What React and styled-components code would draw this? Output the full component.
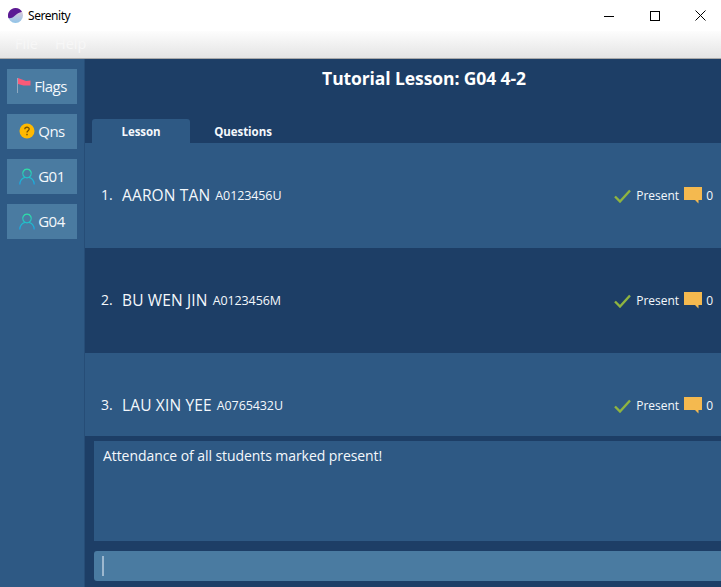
import React from 'react';
import styled, { createGlobalStyle } from 'styled-components';

const Dark = '#1d3e66';
const Mid = '#2e5984';
const Light = '#4a7ba1';
const Text = '#f4f8fc';
const FontStack = '"Open Sans", "Noto Sans", sans-serif';

const GlobalStyle = createGlobalStyle`
  html, body {
    margin: 0;
    padding: 0;
    background: ${Dark};
    overflow: hidden;
  }
  * { box-sizing: border-box; }
`;

const Window = styled.div`
  width: 721px;
  height: 587px;
  display: flex;
  flex-direction: column;
  overflow: hidden;
  font-family: ${FontStack};
  color: ${Text};
`;

const TitleBar = styled.div`
  height: 31px;
  flex: none;
  display: flex;
  align-items: center;
  margin-right: -2px;
  padding-left: 8px;
  background: #fff;
  color: #000;
  font-size: 12px;
`;

const AppName = styled.span`
  margin-left: 5px;
  flex: 1;
  font-family: "Noto Sans", sans-serif;
  letter-spacing: -0.45px;
`;

const WinButton = styled.div`
  width: 45.5px;
  height: 31px;
  display: flex;
  align-items: center;
  justify-content: center;
`;

const MenuBar = styled.div`
  height: 28px;
  flex: none;
  display: flex;
  gap: 17px;
  align-items: center;
  padding: 0 0 2px 15px;
  background: linear-gradient(#fdfdfd, #e4e4e4);
  border-bottom: 1px solid #a9a9a9;
  font-size: 14.5px;
  color: #f7f7f7;
`;

const Body = styled.div`
  flex: 1;
  min-height: 0;
  display: flex;
`;

const Sidebar = styled.nav`
  width: 85px;
  flex: none;
  display: flex;
  flex-direction: column;
  gap: 10px;
  padding: 10px 7px;
  background: ${Mid};
  border-right: 1px solid #264d77;
`;

const SideButton = styled.div`
  width: 70px;
  height: 35px;
  padding-bottom: 1px;
  display: flex;
  align-items: center;
  justify-content: center;
  gap: 3px;
  background: ${Light};
  font-size: 15px;
  letter-spacing: -0.5px;
`;

const Main = styled.main`
  flex: 1;
  min-width: 0;
  display: flex;
  flex-direction: column;
  background: ${Dark};
`;

const Heading = styled.h1`
  height: 60px;
  flex: none;
  margin: 0;
  padding: 6px 0 0 42px;
  text-align: center;
  font-size: 17.5px;
  line-height: 26px;
  font-weight: 700;
  color: #fff;
  letter-spacing: -0.1px;
`;

const Tabs = styled.div`
  height: 24px;
  flex: none;
  display: flex;
  padding-left: 7px;
`;

const Tab = styled.div`
  width: ${(p) => p.$width}px;
  display: flex;
  align-items: center;
  justify-content: center;
  padding-top: 1px;
  border-radius: 3px 3px 0 0;
  background: ${(p) => (p.$active ? Mid : 'transparent')};
  font-size: 11.5px;
  font-weight: 700;
  letter-spacing: -0.05px;
`;

const List = styled.div`
  height: 293px;
  flex: none;
  overflow: hidden;
`;

const Row = styled.div`
  height: 105px;
  display: flex;
  align-items: center;
  padding: 0 8px 2px 16px;
  background: ${(p) => (p.$alt ? Dark : Mid)};
`;

const Index = styled.span`
  width: 21px;
  font-size: 14px;
`;

const Name = styled.span`
  font-size: 15.5px;
  letter-spacing: 0.15px;
  font-weight: 400;
`;

const Matric = styled.span`
  margin-left: 5px;
  padding-top: 1px;
  font-size: 12.5px;
  letter-spacing: -0.1px;
`;

const Status = styled.div`
  margin-left: auto;
  padding-top: 2px;
  display: flex;
  align-items: center;
  font-size: 12px;
  letter-spacing: 0;
`;

const PresentLabel = styled.span`
  margin: 0 5px;
`;

const CountLabel = styled.span`
  margin-left: 4px;
`;

const ResultBox = styled.div`
  height: 100px;
  flex: none;
  margin: 5px 0 0 9px;
  padding: 4px 9px;
  background: ${Mid};
  font-size: 14px;
  line-height: 22px;
  letter-spacing: -0.07px;
`;

const CommandBox = styled.div`
  height: 30px;
  flex: none;
  margin: 10px 0 0 9px;
  padding: 5px 8px;
  border-radius: 3px 0 0 3px;
  background: ${Light};
`;

const Caret = styled.div`
  width: 2px;
  height: 20px;
  background: #9db8cf;
`;

const Logo = () => (
  <svg width="15" height="15" viewBox="0 0 15 15">
    <defs>
      <linearGradient id="logoBase" x1="0" y1="0" x2="0" y2="1">
        <stop offset="0" stopColor="#f3c9d6" />
        <stop offset="1" stopColor="#8fc4e8" />
      </linearGradient>
    </defs>
    <circle cx="7.5" cy="7.5" r="7.5" fill="url(#logoBase)" />
    <path d="M1.2 3.5A7.5 7.5 0 0 1 14 3.8C11 5 9 5.5 6.5 8 4.5 10 2 10.5.4 10A7.5 7.5 0 0 1 1.2 3.5Z" fill="#5b1a94" />
  </svg>
);

const FlagIcon = () => (
  <svg width="14" height="16" viewBox="0 0 14 16">
    <path d="M.5 0v15" stroke="#8fa9c0" strokeWidth="1" />
    <path d="M1 0l8 3 4.5-.5v5H6.5L1 6Z" fill="#fb5a78" />
  </svg>
);

const QuestionIcon = () => (
  <svg width="16" height="16" viewBox="0 0 16 16">
    <circle cx="8" cy="8" r="7.5" fill="#ffb900" />
    <path d="M5.8 6.2C5.8 3.6 10.2 3.6 10.2 6.1C10.2 7.8 8 7.7 8 9.5" fill="none" stroke="#7a5200" strokeWidth="1.3" />
    <rect x="7.3" y="10.8" width="1.4" height="1.5" fill="#7a5200" />
  </svg>
);

const PersonIcon = () => (
  <svg width="16" height="17" viewBox="0 0 16 17" fill="none">
    <defs>
      <linearGradient id="personStroke" x1="0" y1="0" x2="0" y2="1">
        <stop offset="0" stopColor="#2ee0a6" />
        <stop offset="1" stopColor="#17a5e8" />
      </linearGradient>
    </defs>
    <path d="M.8 16.5C.8 12.5 3.5 10 5.6 9.7M15.2 16.5C15.2 12.5 12.5 10 10.4 9.7M8 1.2a4.3 4.3 0 1 0 .01 0Z" stroke="url(#personStroke)" strokeWidth="1.2" />
  </svg>
);

const CheckIcon = () => (
  <svg width="17" height="14" viewBox="0 0 17 14">
    <path d="M1 7.5L6 12.5L16 1.5" fill="none" stroke="#8fb440" strokeWidth="2.4" />
  </svg>
);

const BubbleIcon = () => (
  <svg width="18" height="17" viewBox="0 0 18 17">
    <path d="M0 0h18v13h-3.5v3.5L11 13H0Z" fill="#f4b94f" />
  </svg>
);

const MinimizeIcon = () => (
  <svg width="10" height="10" viewBox="0 0 10 10">
    <path d="M0 5.5h10" stroke="#000" strokeWidth="1" />
  </svg>
);

const MaximizeIcon = () => (
  <svg width="10" height="10" viewBox="0 0 10 10">
    <rect x=".5" y=".5" width="9" height="9" fill="none" stroke="#000" strokeWidth="1" />
  </svg>
);

const CloseIcon = () => (
  <svg width="11" height="11" viewBox="0 0 11 11">
    <path d="M.5 .5l10 10M10.5 .5l-10 10" stroke="#000" strokeWidth="1" />
  </svg>
);

const sideItems = [
  { label: 'Flags', icon: <FlagIcon /> },
  { label: 'Qns', icon: <QuestionIcon /> },
  { label: 'G01', icon: <PersonIcon /> },
  { label: 'G04', icon: <PersonIcon /> },
];

const students = [
  { name: 'AARON TAN', matric: 'A0123456U' },
  { name: 'BU WEN JIN', matric: 'A0123456M' },
  { name: 'LAU XIN YEE', matric: 'A0765432U' },
];

const App = () => (
  <Window>
    <GlobalStyle />
    <TitleBar>
      <Logo />
      <AppName>Serenity</AppName>
      <WinButton><MinimizeIcon /></WinButton>
      <WinButton><MaximizeIcon /></WinButton>
      <WinButton><CloseIcon /></WinButton>
    </TitleBar>
    <MenuBar>
      <span>File</span>
      <span>Help</span>
    </MenuBar>
    <Body>
      <Sidebar>
        {sideItems.map((item) => (
          <SideButton key={item.label}>
            {item.icon}
            {item.label}
          </SideButton>
        ))}
      </Sidebar>
      <Main>
        <Heading>Tutorial Lesson: G04 4-2</Heading>
        <Tabs>
          <Tab $width={98} $active>Lesson</Tab>
          <Tab $width={106}>Questions</Tab>
        </Tabs>
        <List>
          {students.map((student, i) => (
            <Row key={student.matric} $alt={i % 2 === 1}>
              <Index>{i + 1}.</Index>
              <Name>{student.name}</Name>
              <Matric>{student.matric}</Matric>
              <Status>
                <CheckIcon />
                <PresentLabel>Present</PresentLabel>
                <BubbleIcon />
                <CountLabel>0</CountLabel>
              </Status>
            </Row>
          ))}
        </List>
        <ResultBox>Attendance of all students marked present!</ResultBox>
        <CommandBox><Caret /></CommandBox>
      </Main>
    </Body>
  </Window>
);

export default App;
